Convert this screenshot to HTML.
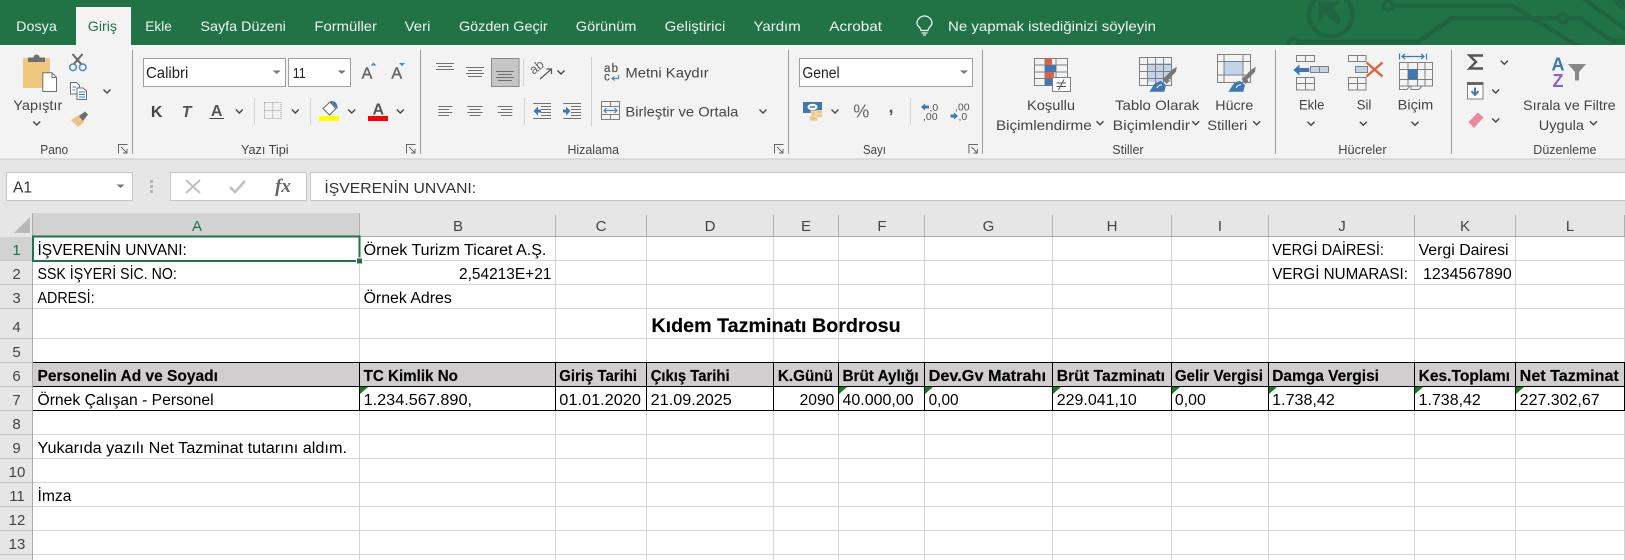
<!DOCTYPE html>
<html lang="tr"><head><meta charset="utf-8"><title>Excel</title>
<style>
html,body{margin:0;padding:0;background:#fff;overflow:hidden}
svg{display:block}
text{font-family:"Liberation Sans",sans-serif}
.t{font-size:14px;fill:#eef5f0}
.r{font-size:14px;fill:#444}
.g{font-size:12.5px;fill:#444}
.c{font-size:15.5px;fill:#000}
.b{font-size:15.5px;fill:#000;font-weight:bold;stroke:#000;stroke-width:.15}
.h{font-size:15px;fill:#444;text-anchor:middle}
.l{stroke:#707070;stroke-width:1;fill:none}
.ic{stroke:#808080;stroke-width:1;fill:none}
</style></head><body>
<svg width="1625" height="560" viewBox="0 0 1625 560" xmlns="http://www.w3.org/2000/svg">
<defs>
<path id="ch" d="M-3.5-1.5L0 2L3.5-1.5" fill="none" stroke="#444" stroke-width="1.4"/>
<path id="tr" d="M-4-1.5H4L0 2Z" fill="#777"/>
<g id="la"><path d="M.5 9.5V.5H9.5M3 3L9 9M9 5V9H5" fill="none" stroke="#666" stroke-width="1"/></g>
<g id="brush">
<path d="M1171.7 70L1176.7 66.7L1176 71.7L1168 80L1165 77.3Z" fill="#777"/>
<path d="M1162.5 79L1165.5 76.5L1169.5 81L1166.5 84Z" fill="#777"/>
<path d="M1149.3 91.7L1155 83.3L1160.7 80.7L1166 85L1164.3 91.7Z" fill="#3f78b0"/>
<path d="M1157 88C1158.5 85.5 1160.5 84.5 1162 85" stroke="#fff" stroke-width="1" fill="none"/>
</g>
</defs>

<!-- tab bar -->
<rect width="1625" height="45" fill="#217346"/>
<g fill="none" stroke="#1e6540" stroke-width="4.5">
<circle cx="1330.7" cy="14.7" r="21.7"/>
<path d="M1392 5.7H1511.7L1580 47"/>
<path d="M1297 42H1418L1451.7 18.3H1558M1568 18.3H1580L1611.7 41H1625"/>
<path d="M1583-2L1625 29"/>
<path d="M1615-2L1625 8" stroke-width="8"/>
<circle cx="1388" cy="5.7" r="4.5" stroke-width="3.5"/>
<circle cx="1563" cy="18.3" r="4.5" stroke-width="3.5"/>
<circle cx="1293" cy="43.5" r="4.5" stroke-width="3.5"/>
</g>
<path d="M1318.3 1.7H1340L1333.3 8.3L1341.7 20.7L1337.3 25L1325 14L1318.3 22.7Z" fill="#1e6540"/>
<rect x="76" y="7" width="55" height="38" fill="#f3f3f3"/>
<text class="t" x="16.2" y="31" textLength="40.6" lengthAdjust="spacingAndGlyphs">Dosya</text>
<text class="t" x="87.8" y="31" textLength="29.2" lengthAdjust="spacingAndGlyphs" style="fill:#217346">Giriş</text>
<text class="t" x="145.3" y="31" textLength="26.5" lengthAdjust="spacingAndGlyphs">Ekle</text>
<text class="t" x="200.4" y="31" textLength="85.4" lengthAdjust="spacingAndGlyphs">Sayfa Düzeni</text>
<text class="t" x="314.4" y="31" textLength="62.6" lengthAdjust="spacingAndGlyphs">Formüller</text>
<text class="t" x="404.6" y="31" textLength="25.8" lengthAdjust="spacingAndGlyphs">Veri</text>
<text class="t" x="459" y="31" textLength="88.6" lengthAdjust="spacingAndGlyphs">Gözden Geçir</text>
<text class="t" x="575.8" y="31" textLength="60.6" lengthAdjust="spacingAndGlyphs">Görünüm</text>
<text class="t" x="664.7" y="31" textLength="60.6" lengthAdjust="spacingAndGlyphs">Geliştirici</text>
<text class="t" x="753.5" y="31" textLength="47.2" lengthAdjust="spacingAndGlyphs">Yardım</text>
<text class="t" x="829.3" y="31" textLength="52.7" lengthAdjust="spacingAndGlyphs">Acrobat</text>
<text class="t" x="948" y="31" textLength="208" lengthAdjust="spacingAndGlyphs">Ne yapmak istediğinizi söyleyin</text>
<path d="M921 30.5C921 27.5 917 26 917 23.5A7.5 7.5 0 0 1 932 23.5C932 26 928 27.5 928 30.5ZM921.5 33H927.5M923 35H926" fill="none" stroke="#eef5f0" stroke-width="1.3"/>

<!-- ribbon -->
<rect y="45" width="1625" height="114" fill="#f3f3f3"/>
<rect y="158.5" width="1625" height="1" fill="#c8c8c8"/>
<rect y="159.5" width="1625" height="54" fill="#e6e6e6"/>
<g fill="#9a9a9a">
<rect x="132" y="50" width="1" height="104"/><rect x="420" y="50" width="1" height="104"/><rect x="788" y="50" width="1" height="104"/><rect x="982" y="50" width="1" height="104"/><rect x="1275" y="50" width="1" height="104"/><rect x="1451" y="50" width="1" height="104"/>
</g>
<g fill="#d0d0d0">
<rect x="254" y="98" width="1" height="27"/><rect x="310" y="98" width="1" height="27"/><rect x="523" y="59" width="1" height="27"/><rect x="524" y="98" width="1" height="27"/><rect x="591" y="57" width="1" height="69"/><rect x="910" y="98" width="1" height="27"/>
</g>

<!-- Pano -->
<rect x="23" y="58" width="27" height="30" rx="1" fill="#efc77f"/>
<path d="M28 62V57.5H33.5A3 3 0 0 1 39.5 57.5H45V62Z" fill="#6e6e6e"/>
<path d="M42.8 91.5V72.8H52L56.5 77.3V91.5Z" fill="#fff" stroke="#6e6e6e"/>
<path d="M52 73V77.5H56.5" fill="none" stroke="#6e6e6e"/>
<path d="M72.5 54L81.5 64.5M82.5 54L73.5 64.5" stroke="#666" stroke-width="2" fill="none"/>
<circle cx="73" cy="67.3" r="3.3" fill="none" stroke="#4a86c0" stroke-width="1.5"/><circle cx="82.7" cy="67.3" r="3.3" fill="none" stroke="#4a86c0" stroke-width="1.5"/>
<path d="M70.5 82.5H76.5L79.5 85.5V94H70.5Z" fill="#fff" stroke="#6e6e6e"/>
<path d="M77 88H83L86.5 91V99.5H77Z" fill="#fff" stroke="#6e6e6e"/>
<path d="M72.5 87H76M72.5 90H75M79 92H85M79 94.5H85M79 97H85" stroke="#3f78b0" stroke-width="1"/>
<use href="#ch" x="107" y="91"/>
<path d="M71 120L79 115L84 122L78 127Z" fill="#e8c384"/>
<path d="M79 116L85 111.5L88 114.5L83 121Z" fill="#6c6c6c"/>
<text class="r" x="13.3" y="110" textLength="49" lengthAdjust="spacingAndGlyphs">Yapıştır</text>
<use href="#ch" x="36.7" y="123"/>
<text class="g" x="40.3" y="154" textLength="27.9" lengthAdjust="spacingAndGlyphs">Pano</text>
<use href="#la" x="118" y="144"/>

<!-- Yazı Tipi -->
<rect x="143.5" y="58.5" width="142" height="28" fill="#fff" stroke="#a0a0a0"/>
<rect x="288.5" y="58.5" width="62" height="28" fill="#fff" stroke="#a0a0a0"/>
<text class="c" x="146" y="78" textLength="42.3" lengthAdjust="spacingAndGlyphs" style="fill:#222">Calibri</text>
<text class="c" x="292.7" y="78" textLength="13" lengthAdjust="spacingAndGlyphs" style="fill:#222;font-size:14.5px">11</text>
<use href="#tr" x="276.7" y="72"/><use href="#tr" x="341.7" y="72"/>
<text x="367" y="78.3" text-anchor="middle" font-size="16" fill="#666" stroke="#666" stroke-width=".4">A</text>
<path d="M370.5 65.5L373.5 62.5L376.5 65.5Z" fill="#4a86c0"/>
<text x="396.7" y="78.3" text-anchor="middle" font-size="16" fill="#666" stroke="#666" stroke-width=".4">A</text>
<path d="M399 63H405L402 66Z" fill="#4a86c0"/>
<text x="156.7" y="117" text-anchor="middle" font-size="16" font-weight="bold" fill="#444">K</text>
<text x="186.7" y="117" text-anchor="middle" font-size="16" font-weight="bold" font-style="italic" fill="#555">T</text>
<text x="216.7" y="116" text-anchor="middle" font-size="16" font-weight="bold" fill="#555">A</text>
<rect x="209.5" y="118" width="14.5" height="1" fill="#444"/>
<use href="#ch" x="239.3" y="111"/>
<path d="M264.5 102.5H281V118.5H264.5ZM272.7 102.5V118.5M264.5 110.5H281" fill="none" stroke="#999" stroke-dasharray="1 1"/>
<use href="#ch" x="295.3" y="111"/>
<path d="M323 108.5L330 102L336 108.5L329.5 115Z" fill="#fff" stroke="#666"/>
<path d="M330 101.5C335 100 338 104 337.5 109L334.5 106Z" fill="#3f78b0"/>
<rect x="319" y="116" width="20" height="5" fill="#ff0"/>
<use href="#ch" x="351.7" y="111"/>
<text x="378.3" y="114.5" text-anchor="middle" font-size="16" font-weight="bold" fill="#555">A</text>
<rect x="368" y="116" width="20" height="5" fill="#f00"/>
<use href="#ch" x="400.3" y="111"/>
<text class="g" x="241" y="154" textLength="47.6" lengthAdjust="spacingAndGlyphs">Yazı Tipi</text>
<use href="#la" x="406" y="144"/>

<!-- Hizalama -->
<path class="l" d="M436 63.5H454M438 66.5H452M436 69.5H454"/>
<path class="l" d="M466 67.5H484M468 70.5H482M466 73.5H484M468 76.5H482"/>
<rect x="491.5" y="58.5" width="27.5" height="28" fill="#c6c6c6" stroke="#8a8a8a"/>
<path class="l" d="M496 71.5H514M498 74.5H512M496 77.5H514M498 80.5H512"/>
<text x="0" y="0" font-size="13" fill="#666" transform="translate(533.5 75) rotate(-38)">ab</text>
<path d="M540 79L551 69.5M546.5 69H551.5V74" fill="none" stroke="#555" stroke-width="1.2"/>
<use href="#ch" x="561" y="72"/>
<text x="604" y="72" font-size="11.5" fill="#555" stroke="#555" stroke-width=".2" textLength="14" lengthAdjust="spacing">ab</text>
<text x="604" y="80.5" font-size="11.5" fill="#555" stroke="#555" stroke-width=".2">c</text>
<path d="M618.5 75V78.5H612.5M614.5 76.5L612 78.5L614.5 80.5" fill="none" stroke="#4a86c0" stroke-width="1.2"/>
<text class="r" x="625.4" y="77.3" textLength="83.3" lengthAdjust="spacingAndGlyphs">Metni Kaydır</text>
<path class="l" d="M438.3 106.5H452.3M438.3 109.5H449M438.3 112.5H452.3M438.3 115.5H449"/>
<path class="l" d="M467.3 106.5H482.7M469.5 109.5H480.5M467.3 112.5H482.7M469.5 115.5H480.5"/>
<path class="l" d="M497.7 106.5H512.3M501 109.5H512.3M497.7 112.5H512.3M501 115.5H512.3"/>
<path class="l" d="M533.3 103.5H551M541 106.5H551M541 109.5H551M541 112.5H551M541 115.5H551M533.3 118.5H551"/>
<path d="M533.5 111L538 106.5V109.5H541V112.5H538V115.5Z" fill="#3f78b0"/>
<path class="l" d="M563.3 103.5H581M571 106.5H581M571 109.5H581M571 112.5H581M571 115.5H581M563.3 118.5H581"/>
<path d="M570.5 111L566 106.5V109.5H563V112.5H566V115.5Z" fill="#3f78b0"/>
<path class="ic" d="M601.5 101.5H619.5V119.5H601.5ZM601.5 106.5H619.5M601.5 114.5H619.5M610.5 101.5V106.5M610.5 114.5V119.5"/>
<path d="M604 110.5H617M606.5 108L604 110.5L606.5 113M614.5 108L617 110.5L614.5 113" fill="none" stroke="#4a86c0" stroke-width="1.2"/>
<text class="r" x="625.4" y="116.7" textLength="112.9" lengthAdjust="spacingAndGlyphs">Birleştir ve Ortala</text>
<use href="#ch" x="763" y="111"/>
<text class="g" x="567.5" y="154" textLength="51.5" lengthAdjust="spacingAndGlyphs">Hizalama</text>
<use href="#la" x="774" y="144"/>

<!-- Sayı -->
<rect x="799.5" y="58.5" width="173" height="28" fill="#fff" stroke="#a0a0a0"/>
<text class="c" x="802.4" y="78" textLength="37.2" lengthAdjust="spacingAndGlyphs" style="fill:#222">Genel</text>
<use href="#tr" x="964" y="72"/>
<rect x="803" y="102" width="19" height="11" fill="#3f78b0"/>
<ellipse cx="812.5" cy="107" rx="5" ry="3.2" fill="#fff"/>
<path d="M810 107H815" stroke="#3f78b0" stroke-width="1.5"/>
<g fill="#efc77f" stroke="#f3f3f3" stroke-width=".6"><rect x="809.5" y="116" width="8" height="5"/><rect x="811" y="111" width="7" height="5"/><rect x="816" y="110.5" width="6.5" height="3.5"/><rect x="816" y="114" width="6.5" height="3.5"/></g>
<use href="#ch" x="835" y="111"/>
<text x="861.3" y="117.5" text-anchor="middle" font-size="18" fill="#666">%</text>
<text x="891" y="112.5" text-anchor="middle" font-size="18" font-weight="bold" fill="#555">,</text>
<path d="M921 107L925 103.5V105.5H929V108.5H925V110.5Z" fill="#3f78b0"/>
<text x="929.5" y="111" font-size="10.5" fill="#555">,0</text>
<text x="923" y="120" font-size="10.5" fill="#555">,00</text>
<text x="955" y="110.5" font-size="10.5" fill="#555">,00</text>
<path d="M958 116L954 112.5V114.5H950.5V117.5H954V119.5Z" fill="#3f78b0"/>
<text x="958.5" y="120" font-size="10.5" fill="#555">,0</text>
<text class="g" x="863" y="154" textLength="23" lengthAdjust="spacingAndGlyphs">Sayı</text>
<use href="#la" x="968.4" y="144"/>

<!-- Stiller -->
<path class="ic" d="M1034.5 58.5H1067.5V85.5H1034.5ZM1034.5 65H1067.5M1034.5 72H1067.5M1034.5 78.5H1067.5M1045 58.5V85.5M1056 58.5V85.5"/>
<rect x="1045" y="58.5" width="7" height="6.5" fill="#dc6244"/><rect x="1045" y="65" width="11" height="7" fill="#3f78b0"/><rect x="1045" y="72" width="9" height="6.5" fill="#dc6244"/><rect x="1045" y="78.5" width="7" height="7" fill="#3f78b0"/>
<rect x="1052.5" y="77.5" width="18" height="14" fill="#fff" stroke="#808080"/>
<path d="M1056.5 83H1066M1056.5 86.5H1066M1064 79.5L1058.5 90" stroke="#555" fill="none"/>
<text class="r" x="1027" y="110" textLength="48" lengthAdjust="spacingAndGlyphs">Koşullu</text>
<text class="r" x="996" y="130" textLength="95.7" lengthAdjust="spacingAndGlyphs">Biçimlendirme</text>
<use href="#ch" x="1100" y="122.7"/>

<rect x="1147" y="63" width="24" height="19" fill="#c1d4ea"/>
<path class="ic" d="M1139.5 57.5H1171.5V85.5H1139.5ZM1139.5 64.5H1171.5M1139.5 71.5H1171.5M1139.5 78.5H1171.5M1147.5 57.5V85.5M1155.5 57.5V85.5M1163.5 57.5V85.5"/>
<use href="#brush"/>
<text class="r" x="1115" y="110" textLength="84.3" lengthAdjust="spacingAndGlyphs">Tablo Olarak</text>
<text class="r" x="1112.7" y="130" textLength="77.3" lengthAdjust="spacingAndGlyphs">Biçimlendir</text>
<use href="#ch" x="1195.7" y="122.7"/>

<rect x="1224" y="61.5" width="19" height="13.5" fill="#c1d4ea"/>
<path class="ic" d="M1217.5 54.5H1250.5V82.5H1217.5ZM1217.5 61.5H1250.5M1217.5 75H1250.5M1224 54.5V82.5M1243 54.5V82.5"/>
<use href="#brush" x="79"/>
<text class="r" x="1215.3" y="110" textLength="38" lengthAdjust="spacingAndGlyphs">Hücre</text>
<text class="r" x="1207.3" y="130" textLength="40" lengthAdjust="spacingAndGlyphs">Stilleri</text>
<use href="#ch" x="1256.7" y="122.7"/>
<text class="g" x="1112.3" y="154" textLength="31.3" lengthAdjust="spacingAndGlyphs">Stiller</text>

<!-- Hücreler -->
<path class="ic" d="M1296.5 55.5H1314.5V61.5H1296.5ZM1305.5 55.5V61.5M1296.5 77.5H1314.5V90H1296.5ZM1296.5 83.5H1314.5M1305.5 77.5V90"/>
<rect x="1310.5" y="66.5" width="18" height="6" fill="#c1d4ea" stroke="#808080"/><path d="M1319.5 66.5V72.5" stroke="#808080"/>
<path d="M1293.3 70L1299.5 64.5V68H1309.3V72H1299.5V75.5Z" fill="#3f78b0"/>
<text class="r" x="1299" y="109.5" textLength="25.3" lengthAdjust="spacingAndGlyphs">Ekle</text>
<use href="#ch" x="1311" y="123.3"/>
<path class="ic" d="M1348.5 55.5H1366V61.5H1348.5ZM1357.5 55.5V61.5M1348.5 77.5H1366V90H1348.5ZM1348.5 83.5H1366M1357.5 77.5V90"/>
<rect x="1355.5" y="66.5" width="12" height="6" fill="#c1d4ea" stroke="#808080"/>
<path d="M1366.5 62.5L1382.5 76.5M1382.5 62.5L1366.5 76.5" stroke="#dc6244" stroke-width="2.4" fill="none"/>
<text class="r" x="1356.7" y="109.5" textLength="14.6" lengthAdjust="spacingAndGlyphs">Sil</text>
<use href="#ch" x="1363.3" y="123.3"/>
<path d="M1399.5 53.5V59.5M1426.5 53.5V59.5M1402 56.5H1424M1405 54L1402 56.5L1405 59M1421 54L1424 56.5L1421 59" fill="none" stroke="#3f78b0" stroke-width="1.2"/>
<path class="ic" d="M1399.5 62.5H1432.5V86H1399.5ZM1399.5 69.5H1432.5M1399.5 79.5H1432.5M1408 62.5V86M1417.5 62.5V86M1425 62.5V86"/>
<rect x="1408" y="69" width="9.5" height="10.5" fill="#3f78b0"/>
<path class="ic" d="M1399.5 86V89.5H1407L1410 86M1411 86V89.5H1419L1422 86"/>
<text class="r" x="1397.7" y="109.5" textLength="35.6" lengthAdjust="spacingAndGlyphs">Biçim</text>
<use href="#ch" x="1415" y="123.3"/>
<text class="g" x="1338.3" y="154" textLength="48.3" lengthAdjust="spacingAndGlyphs">Hücreler</text>

<!-- Düzenleme -->
<path d="M1483 55.5H1469.5L1476 62L1469.5 68.5H1483" fill="none" stroke="#555" stroke-width="2.4"/>
<use href="#ch" x="1504.3" y="62.3"/>
<rect x="1467.5" y="82.5" width="15.5" height="16.5" fill="#fff" stroke="#808080"/>
<rect x="1467" y="82" width="16.5" height="3" fill="#666"/>
<path d="M1475 87.5V94M1471.5 91L1475 95L1478.5 91" fill="none" stroke="#3f78b0" stroke-width="2"/>
<use href="#ch" x="1495.7" y="91"/>
<path d="M1468.5 122L1478 112.5L1483.5 117.5L1474 128Z" fill="#e8899d"/>
<use href="#ch" x="1495.7" y="120"/>
<text x="1558" y="70.5" text-anchor="middle" font-size="18" font-weight="bold" fill="#3f78b0">A</text>
<text x="1558" y="87" text-anchor="middle" font-size="18" font-weight="bold" fill="#8d63b8">Z</text>
<path d="M1568 64H1586L1579 72V80.5H1575V72Z" fill="#888"/>
<text class="r" x="1523" y="110" textLength="92.6" lengthAdjust="spacingAndGlyphs">Sırala ve Filtre</text>
<text class="r" x="1538.8" y="130" textLength="45.2" lengthAdjust="spacingAndGlyphs">Uygula</text>
<use href="#ch" x="1593.4" y="122.7"/>
<text class="g" x="1533.3" y="154" textLength="63.2" lengthAdjust="spacingAndGlyphs">Düzenleme</text>

<!-- formula bar -->
<rect x="6.5" y="172.5" width="126" height="28" fill="#fff" stroke="#c6c6c6"/>
<text class="c" x="13" y="192.3" textLength="19" lengthAdjust="spacingAndGlyphs" style="fill:#333">A1</text>
<use href="#tr" x="120.5" y="186"/>
<g fill="#b4b4b4"><rect x="150" y="180" width="3" height="3"/><rect x="150" y="185" width="3" height="3"/><rect x="150" y="190" width="3" height="3"/></g>
<rect x="170.5" y="172.5" width="136" height="28" fill="#fff" stroke="#c6c6c6"/>
<path d="M186 180L200 193M200 180L186 193" stroke="#c0c0c0" stroke-width="2" fill="none"/>
<path d="M230 187L235 192L245 181" stroke="#c0c0c0" stroke-width="2.6" fill="none"/>
<text x="283" y="192" text-anchor="middle" font-style="italic" font-weight="bold" font-size="19" fill="#666" style="font-family:'Liberation Serif',serif">fx</text>
<rect x="310.5" y="172.5" width="1316" height="28" fill="#fff" stroke="#c6c6c6"/>
<text class="c" x="324.4" y="193" textLength="151.8" lengthAdjust="spacingAndGlyphs" style="fill:#333;font-size:14.5px">İŞVERENİN UNVANI:</text>

<!-- sheet -->
<rect y="237" width="1625" height="323" fill="#fff"/>
<rect y="213" width="1625" height="24" fill="#e6e6e6"/>
<rect y="237" width="33" height="323" fill="#e6e6e6"/>
<rect y="237" width="33" height="24" fill="#d2d2d2"/>
<rect x="33" y="213" width="327" height="24" fill="#d2d2d2"/>
<path d="M30 217V233H14Z" fill="#b8b8b8"/>
<!-- row 6 fill -->
<rect x="33" y="363" width="1592" height="24" fill="#d0cece"/>
<!-- gridlines -->
<path d="M33 260.5H1625M33 284.5H1625M33 308.5H1625M33 338.5H1625M33 434.5H1625M33 458.5H1625M33 482.5H1625M33 506.5H1625M33 530.5H1625M33 554.5H1625" stroke="#d4d4d4" fill="none"/>
<path d="M359.5 237V560M555.5 237V560M646.5 237V560M773.5 237V560M838.5 237V560M924.5 237V560M1052.5 237V560M1171.5 237V560M1268.5 237V560M1414.5 237V560M1515.5 237V560M1624.5 237V560" stroke="#d4d4d4" fill="none"/>
<!-- headers separators -->
<path d="M359.5 213V237M555.5 215V237M646.5 215V237M773.5 215V237M838.5 215V237M924.5 215V237M1052.5 215V237M1171.5 215V237M1268.5 215V237M1414.5 215V237M1515.5 215V237M1624.5 215V237" stroke="#b0b0b0" fill="none"/>
<path d="M0 260.5H32M0 284.5H32M0 308.5H32M0 338.5H32M0 362.5H32M0 386.5H32M0 410.5H32M0 434.5H32M0 458.5H32M0 482.5H32M0 506.5H32M0 530.5H32M0 554.5H32" stroke="#c4c4c4" fill="none"/>
<rect x="32" y="213" width="1" height="347" fill="#ababab"/>
<rect x="33" y="236" width="1592" height="1" fill="#ababab"/>
<!-- black borders -->
<path d="M33 362.5H1625M33 386.5H1625M33 410.5H1625M359.5 362V411M555.5 362V411M646.5 362V411M773.5 362V411M838.5 362V411M924.5 362V411M1052.5 362V411M1171.5 362V411M1268.5 362V411M1414.5 362V411M1515.5 362V411M1624.5 362V411" stroke="#000" fill="none"/>
<!-- col letters -->
<text class="h" x="197" y="231" style="fill:#217346">A</text>
<text class="h" x="458" y="231">B</text><text class="h" x="601" y="231">C</text><text class="h" x="710" y="231">D</text><text class="h" x="806" y="231">E</text><text class="h" x="882" y="231">F</text><text class="h" x="988.5" y="231">G</text><text class="h" x="1112" y="231">H</text><text class="h" x="1220" y="231">I</text><text class="h" x="1342" y="231">J</text><text class="h" x="1465" y="231">K</text><text class="h" x="1570" y="231">L</text>
<!-- row numbers -->
<text class="h" x="16.5" y="255" style="fill:#217346">1</text>
<text class="h" x="16.5" y="279">2</text><text class="h" x="16.5" y="303">3</text><text class="h" x="16.5" y="332">4</text><text class="h" x="16.5" y="357">5</text><text class="h" x="16.5" y="381">6</text><text class="h" x="16.5" y="405">7</text><text class="h" x="16.5" y="429">8</text><text class="h" x="16.5" y="453">9</text><text class="h" x="17" y="477">10</text><text class="h" x="17" y="501">11</text><text class="h" x="17" y="525">12</text><text class="h" x="17" y="549">13</text>
<!-- triangles -->
<g fill="#0f7d1e">
<path d="M360 387H368L360 394Z"/><path d="M839 387H847L839 394Z"/><path d="M925 387H933L925 394Z"/><path d="M1053 387H1061L1053 394Z"/><path d="M1172 387H1180L1172 394Z"/><path d="M1269 387H1277L1269 394Z"/><path d="M1415 387H1423L1415 394Z"/><path d="M1516 387H1524L1516 394Z"/>
</g>
<!-- cell text -->
<text class="c" x="37.5" y="255" textLength="149.3" lengthAdjust="spacingAndGlyphs">İŞVERENİN UNVANI:</text>
<text class="c" x="363.6" y="255" textLength="182.8" lengthAdjust="spacingAndGlyphs">Örnek Turizm Ticaret A.Ş.</text>
<text class="c" x="1272.2" y="255" textLength="111.8" lengthAdjust="spacingAndGlyphs">VERGİ DAİRESİ:</text>
<text class="c" x="1418.6" y="255" textLength="90" lengthAdjust="spacingAndGlyphs">Vergi Dairesi</text>
<text class="c" x="37.5" y="279" textLength="139.3" lengthAdjust="spacingAndGlyphs">SSK İŞYERİ SİC. NO:</text>
<text class="c" x="459" y="279" textLength="92.4" lengthAdjust="spacingAndGlyphs">2,54213E+21</text>
<text class="c" x="1272.2" y="279" textLength="135.8" lengthAdjust="spacingAndGlyphs">VERGİ NUMARASI:</text>
<text class="c" x="1423" y="279" textLength="88.7" lengthAdjust="spacingAndGlyphs">1234567890</text>
<text class="c" x="37.5" y="303" textLength="57.1" lengthAdjust="spacingAndGlyphs">ADRESİ:</text>
<text class="c" x="363.6" y="303" textLength="88.2" lengthAdjust="spacingAndGlyphs">Örnek Adres</text>
<text class="b" x="651.4" y="332" textLength="249.3" lengthAdjust="spacingAndGlyphs" style="font-size:19.5px">Kıdem Tazminatı Bordrosu</text>
<text class="b" x="37.5" y="381" textLength="180.4" lengthAdjust="spacingAndGlyphs">Personelin Ad ve Soyadı</text>
<text class="b" x="363.6" y="381" textLength="94.3" lengthAdjust="spacingAndGlyphs">TC Kimlik No</text>
<text class="b" x="559.3" y="381" textLength="77.7" lengthAdjust="spacingAndGlyphs">Giriş Tarihi</text>
<text class="b" x="650.7" y="381" textLength="78.9" lengthAdjust="spacingAndGlyphs">Çıkış Tarihi</text>
<text class="b" x="777.9" y="381" textLength="55" lengthAdjust="spacingAndGlyphs">K.Günü</text>
<text class="b" x="842.5" y="381" textLength="76.1" lengthAdjust="spacingAndGlyphs">Brüt Aylığı</text>
<text class="b" x="928.6" y="381" textLength="117.4" lengthAdjust="spacingAndGlyphs">Dev.Gv Matrahı</text>
<text class="b" x="1056.8" y="381" textLength="108.2" lengthAdjust="spacingAndGlyphs">Brüt Tazminatı</text>
<text class="b" x="1174.9" y="381" textLength="88.1" lengthAdjust="spacingAndGlyphs">Gelir Vergisi</text>
<text class="b" x="1272.2" y="381" textLength="106.8" lengthAdjust="spacingAndGlyphs">Damga Vergisi</text>
<text class="b" x="1418.6" y="381" textLength="91.4" lengthAdjust="spacingAndGlyphs">Kes.Toplamı</text>
<text class="b" x="1519.7" y="381" textLength="99.1" lengthAdjust="spacingAndGlyphs">Net Tazminat</text>
<text class="c" x="37.5" y="405" textLength="176.1" lengthAdjust="spacingAndGlyphs">Örnek Çalışan - Personel</text>
<text class="c" x="363.6" y="405" textLength="108.4" lengthAdjust="spacingAndGlyphs">1.234.567.890,</text>
<text class="c" x="559.3" y="405" textLength="81.7" lengthAdjust="spacingAndGlyphs">01.01.2020</text>
<text class="c" x="650.7" y="405" textLength="81.1" lengthAdjust="spacingAndGlyphs">21.09.2025</text>
<text class="c" x="799.6" y="405" textLength="34.7" lengthAdjust="spacingAndGlyphs">2090</text>
<text class="c" x="842.5" y="405" textLength="71.1" lengthAdjust="spacingAndGlyphs">40.000,00</text>
<text class="c" x="928.6" y="405" textLength="30" lengthAdjust="spacingAndGlyphs">0,00</text>
<text class="c" x="1056.8" y="405" textLength="79.9" lengthAdjust="spacingAndGlyphs">229.041,10</text>
<text class="c" x="1174.9" y="405" textLength="30.9" lengthAdjust="spacingAndGlyphs">0,00</text>
<text class="c" x="1272.2" y="405" textLength="62.6" lengthAdjust="spacingAndGlyphs">1.738,42</text>
<text class="c" x="1418.6" y="405" textLength="62.2" lengthAdjust="spacingAndGlyphs">1.738,42</text>
<text class="c" x="1519.7" y="405" textLength="79.9" lengthAdjust="spacingAndGlyphs">227.302,67</text>
<text class="c" x="37.5" y="453" textLength="309.5" lengthAdjust="spacingAndGlyphs">Yukarıda yazılı Net Tazminat tutarını aldım.</text>
<text class="c" x="37.5" y="501" textLength="33.9" lengthAdjust="spacingAndGlyphs">İmza</text>
<!-- selection -->
<rect x="33" y="236.5" width="326.5" height="24.5" fill="none" stroke="#217346" stroke-width="2"/>
<rect x="356.5" y="258" width="6" height="6" fill="#217346" stroke="#fff" stroke-width="1"/>
</svg>
</body></html>
